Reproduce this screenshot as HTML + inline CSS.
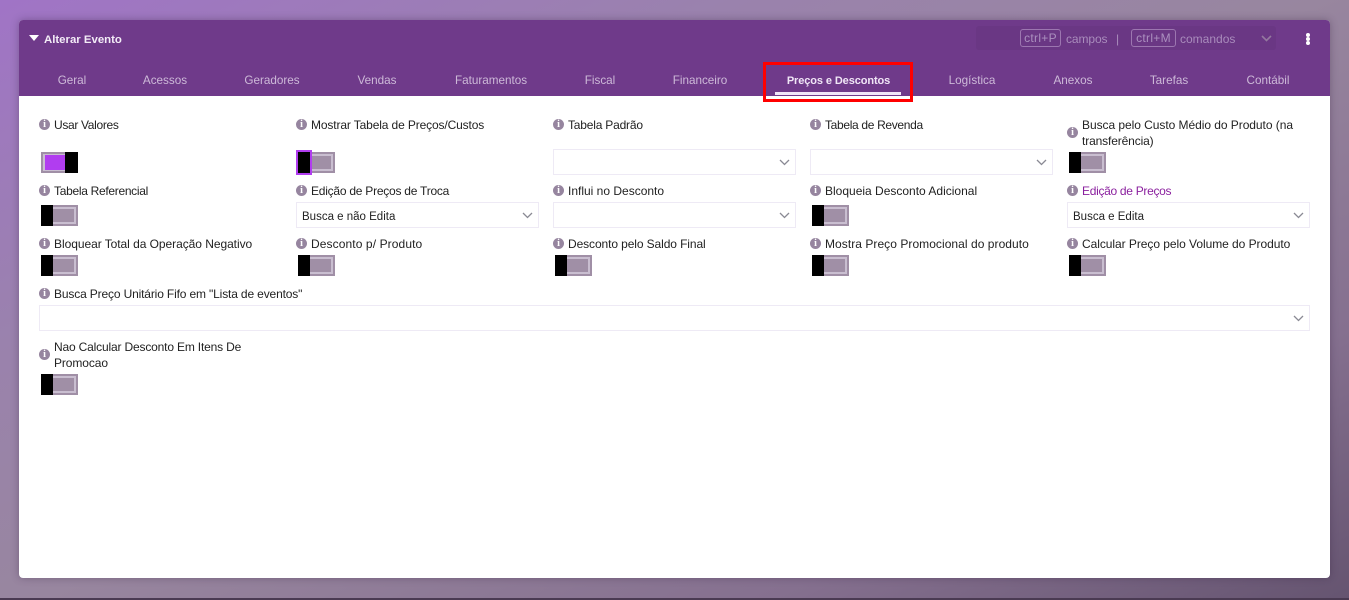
<!DOCTYPE html>
<html lang="pt-BR"><head><meta charset="utf-8"><title>Alterar Evento</title>
<style>
html,body{margin:0;padding:0;width:1349px;height:600px;overflow:hidden}
body{position:relative;font-family:"Liberation Sans",sans-serif;font-size:12px;color:#222;background:linear-gradient(155deg,#a074c6 0%,#9a82ad 28%,#98869f 50%,#85708f 78%,#655470 100%)}
.bl{position:absolute;left:0;top:598px;width:1349px;height:2px;background:#4a3a52}
.card{position:absolute;left:19px;top:20px;width:1311px;height:558px;background:#fff;border-radius:4px;box-shadow:0 0 8px rgba(50,30,60,.35)}
.hd{position:absolute;left:19px;top:20px;width:1311px;height:76px;background:#6f3a8a;border-radius:4px 4px 0 0}
.a{position:absolute;white-space:nowrap;line-height:16px}
.t{position:absolute;top:73px;transform:translateX(-50%);white-space:nowrap;line-height:16px;color:#cdb9d8;font-size:11.7px}
.l{position:absolute;white-space:nowrap;line-height:16px;color:#222}
.i{position:absolute;width:11px;height:11px;border-radius:50%;background:#96859f;color:#fff;font:bold 10px/11px "Liberation Serif",serif;text-align:center}
.s{position:absolute;height:24px;border:1px solid #eeeaf5;background:#fff;line-height:24px;font-size:11.5px;color:#222}
.s span{position:absolute;left:5px;top:2px}
.s svg{position:absolute;right:5px;top:9px}
.g{position:absolute;width:37px;height:21px;background:#a08fa6;box-sizing:border-box;border:2px solid #a08fa6}
.g:before{content:"";position:absolute;left:-2px;top:0;right:0;bottom:0;border:2px solid #c9bed0;border-left:0}
.g:after{content:"";position:absolute;left:-2px;top:-2px;width:12px;height:21px;background:#000}
.k{position:absolute;border:1px solid #9c76b0;border-radius:3px;color:#ab90bf;height:16px;line-height:16px;text-align:center;font-size:12px;letter-spacing:.3px}
.m{position:absolute;color:#a98cbc;line-height:16px;font-size:12px;white-space:nowrap}
</style></head><body>
<div class="card"></div>
<div class="hd"></div>
<div class="bl"></div>

<svg style="position:absolute;left:29px;top:35px" width="10" height="7"><path d="M0 0h10L5 6z" fill="#fff"/></svg>
<div class="a" style="left:44px;top:32px;color:#f3ecf7;font-weight:bold;font-size:11.4px">Alterar Evento</div>

<div style="position:absolute;left:976px;top:26px;width:300px;height:24px;background:rgba(60,30,80,.09);border-radius:3px"></div>
<div class="k" style="left:1020px;top:29px;width:39px">ctrl+P</div>
<div class="m" style="left:1066px;top:31px;letter-spacing:-.1px">campos</div>
<div class="m" style="left:1116px;top:31px">|</div>
<div class="k" style="left:1131px;top:29px;width:43px">ctrl+M</div>
<div class="m" style="left:1180px;top:31px">comandos</div>
<svg style="position:absolute;left:1261px;top:35px" width="11" height="7"><path d="M1 1l4.5 4.5L10 1" fill="none" stroke="#94789f" stroke-width="1.6"/></svg>
<div style="position:absolute;left:1306px;top:33px;width:4px;height:4px;border-radius:50%;background:#fff"></div>
<div style="position:absolute;left:1306px;top:37px;width:4px;height:4px;border-radius:50%;background:#fff"></div>
<div style="position:absolute;left:1306px;top:41px;width:4px;height:4px;border-radius:50%;background:#fff"></div>

<div class="t" style="left:72px">Geral</div>
<div class="t" style="left:165px">Acessos</div>
<div class="t" style="left:272px">Geradores</div>
<div class="t" style="left:377px">Vendas</div>
<div class="t" style="left:491px">Faturamentos</div>
<div class="t" style="left:600px">Fiscal</div>
<div class="t" style="left:700px">Financeiro</div>
<div class="t" style="left:838.5px;color:#f0e6f6;font-weight:bold;font-size:11px;letter-spacing:-.1px">Preços e Descontos</div>
<div class="t" style="left:972px">Logística</div>
<div class="t" style="left:1073px">Anexos</div>
<div class="t" style="left:1169px">Tarefas</div>
<div class="t" style="left:1268px">Contábil</div>
<div style="position:absolute;left:775px;top:92px;width:126px;height:3px;background:#f1e6f8"></div>
<div style="position:absolute;left:763px;top:62px;width:144px;height:34px;border:3px solid #f00"></div>

<!-- row 1 -->
<div class="i" style="left:39px;top:119px">i</div><div class="l" style="left:54px;top:117px;letter-spacing:-.33px">Usar Valores</div>
<div class="i" style="left:296px;top:119px">i</div><div class="l" style="left:311px;top:117px;letter-spacing:-.13px">Mostrar Tabela de Preços/Custos</div>
<div class="i" style="left:553px;top:119px">i</div><div class="l" style="left:568px;top:117px;letter-spacing:-.2px">Tabela Padrão</div>
<div class="i" style="left:810px;top:119px">i</div><div class="l" style="left:825px;top:117px;letter-spacing:-.33px">Tabela de Revenda</div>
<div class="i" style="left:1067px;top:127px">i</div><div class="l" style="left:1082px;top:117px;letter-spacing:-.05px">Busca pelo Custo Médio do Produto (na<br><span style="letter-spacing:-.13px">transferência)</span></div>

<div style="position:absolute;left:41px;top:152px;width:37px;height:21px;background:#a08fa6"></div>
<div style="position:absolute;left:43px;top:154px;width:33px;height:17px;background:#c9bed0"></div>
<div style="position:absolute;left:45px;top:155px;width:20px;height:15px;background:#b13df0"></div>
<div style="position:absolute;left:65px;top:152px;width:13px;height:21px;background:#000"></div>

<div class="g" style="left:298px;top:152px"></div>
<div style="position:absolute;left:296px;top:150px;width:12px;height:21px;border:2px solid #b13df0;background:#000"></div>

<div class="s" style="left:553px;top:149px;width:241px"><svg width="11" height="7"><path d="M1 1l4.5 4.5L10 1" fill="none" stroke="#8a8a94" stroke-width="1.3"/></svg></div>
<div class="s" style="left:810px;top:149px;width:241px"><svg width="11" height="7"><path d="M1 1l4.5 4.5L10 1" fill="none" stroke="#8a8a94" stroke-width="1.3"/></svg></div>
<div class="g" style="left:1069px;top:152px"></div>

<!-- row 2 -->
<div class="i" style="left:39px;top:185px">i</div><div class="l" style="left:54px;top:183px;letter-spacing:-.3px">Tabela Referencial</div>
<div class="i" style="left:296px;top:185px">i</div><div class="l" style="left:311px;top:183px;letter-spacing:-.24px">Edição de Preços de Troca</div>
<div class="i" style="left:553px;top:185px">i</div><div class="l" style="left:568px;top:183px">Influi no Desconto</div>
<div class="i" style="left:810px;top:185px">i</div><div class="l" style="left:825px;top:183px">Bloqueia Desconto Adicional</div>
<div class="i" style="left:1067px;top:185px">i</div><div class="l" style="left:1082px;top:183px;color:#8a1f9e;letter-spacing:-.3px">Edição de Preços</div>

<div class="g" style="left:41px;top:205px"></div>
<div class="s" style="left:296px;top:202px;width:241px"><span>Busca e não Edita</span><svg width="11" height="7"><path d="M1 1l4.5 4.5L10 1" fill="none" stroke="#8a8a94" stroke-width="1.3"/></svg></div>
<div class="s" style="left:553px;top:202px;width:241px"><svg width="11" height="7"><path d="M1 1l4.5 4.5L10 1" fill="none" stroke="#8a8a94" stroke-width="1.3"/></svg></div>
<div class="g" style="left:812px;top:205px"></div>
<div class="s" style="left:1067px;top:202px;width:241px"><span>Busca e Edita</span><svg width="11" height="7"><path d="M1 1l4.5 4.5L10 1" fill="none" stroke="#8a8a94" stroke-width="1.3"/></svg></div>

<!-- row 3 -->
<div class="i" style="left:39px;top:238px">i</div><div class="l" style="left:54px;top:236px;letter-spacing:-.05px">Bloquear Total da Operação Negativo</div>
<div class="i" style="left:296px;top:238px">i</div><div class="l" style="left:311px;top:236px;letter-spacing:.1px">Desconto p/ Produto</div>
<div class="i" style="left:553px;top:238px">i</div><div class="l" style="left:568px;top:236px;letter-spacing:-.1px">Desconto pelo Saldo Final</div>
<div class="i" style="left:810px;top:238px">i</div><div class="l" style="left:825px;top:236px;letter-spacing:.05px">Mostra Preço Promocional do produto</div>
<div class="i" style="left:1067px;top:238px">i</div><div class="l" style="left:1082px;top:236px;letter-spacing:-.05px">Calcular Preço pelo Volume do Produto</div>

<div class="g" style="left:41px;top:255px"></div>
<div class="g" style="left:298px;top:255px"></div>
<div class="g" style="left:555px;top:255px"></div>
<div class="g" style="left:812px;top:255px"></div>
<div class="g" style="left:1069px;top:255px"></div>

<!-- row 4 -->
<div class="i" style="left:39px;top:288px">i</div><div class="l" style="left:54px;top:286px;letter-spacing:-.15px">Busca Preço Unitário Fifo em "Lista de eventos"</div>
<div class="s" style="left:39px;top:305px;width:1269px"><svg width="11" height="7"><path d="M1 1l4.5 4.5L10 1" fill="none" stroke="#8a8a94" stroke-width="1.3"/></svg></div>

<!-- row 5 -->
<div class="i" style="left:39px;top:349px">i</div><div class="l" style="left:54px;top:339px;letter-spacing:-.17px">Nao Calcular Desconto Em Itens De<br><span style="letter-spacing:-.1px">Promocao</span></div>
<div class="g" style="left:41px;top:374px"></div>
</body></html>
